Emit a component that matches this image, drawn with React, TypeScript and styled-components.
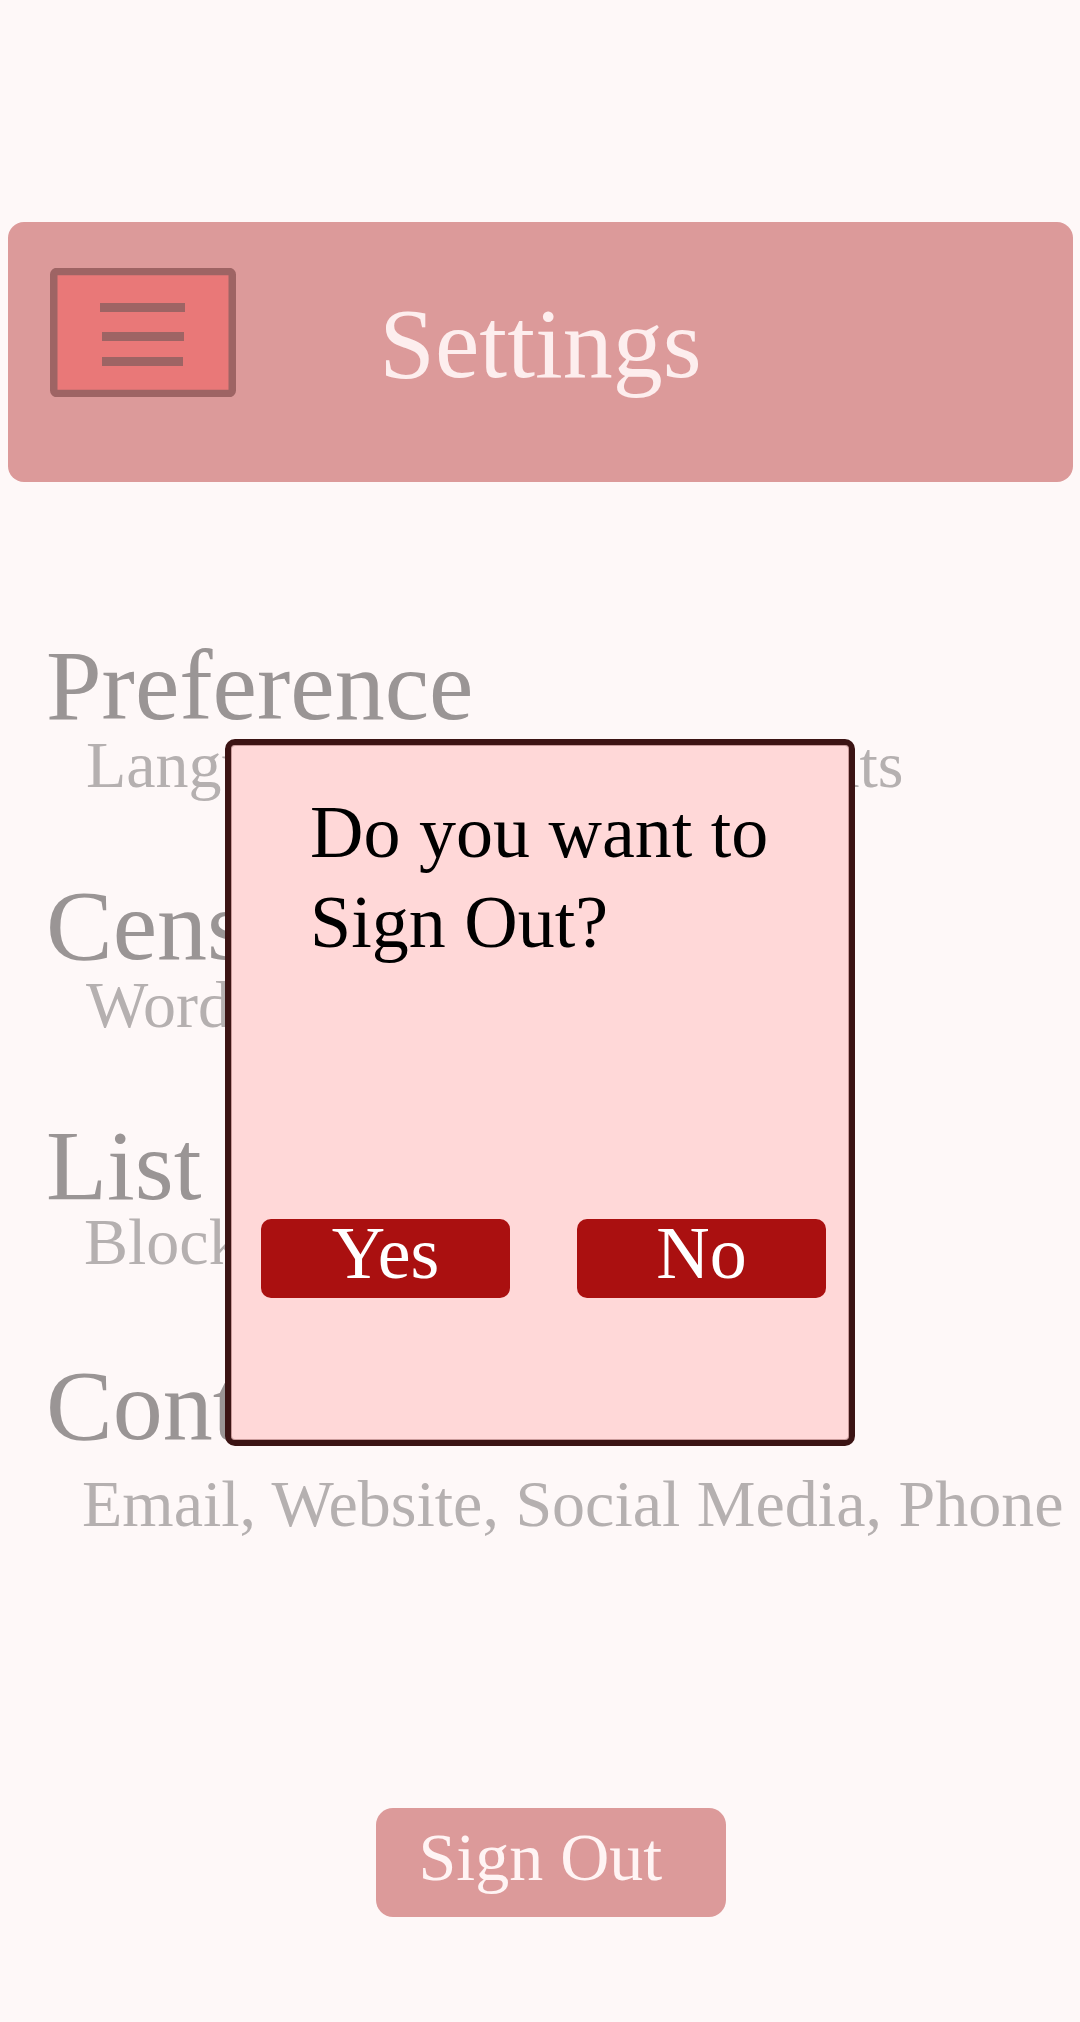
import styled, { createGlobalStyle } from 'styled-components';

const GlobalStyle = createGlobalStyle`
    * {
        box-sizing: border-box;
    }
    html, body {
        margin: 0;
        padding: 0;
        background: #fef8f8;
    }
    body {
        font-family: "Liberation Serif", "Times New Roman", serif;
    }
`;

const Page = styled.div`
    position: relative;
    min-height: 2022px;
    padding: 222px 7px 0 8px;
    display: flex;
    flex-direction: column;
`;

const Header = styled.header`
    height: 260px;
    border-radius: 16px;
    background: #dc9a9a;
    display: grid;
    grid-template-columns: 1fr auto 1fr;
    align-items: start;
`;

const MenuButton = styled.button`
    justify-self: start;
    display: block;
    width: 186px;
    height: 129px;
    margin: 46px 0 0 42px;
    padding: 0;
    border: 0;
    background: none;
`;

const Title = styled.h1`
    margin: 72px 0 0;
    font-size: 100px;
    line-height: 100px;
    font-weight: 400;
    color: #fdeeee;
`;

const Sections = styled.div`
    margin-top: 154px;
    padding-left: 38px;
`;

const Section = styled.section`
    height: 240px;
`;

const SectionTitle = styled.div`
    font-size: 100px;
    line-height: 100px;
    color: #9a9595;
    white-space: nowrap;
`;

const SectionHint = styled.div<{ $shift: number; $indent: number }>`
    margin-top: ${(p) => p.$shift}px;
    padding-left: ${(p) => p.$indent}px;
    font-size: 66px;
    line-height: 66px;
    color: #b5b0b0;
    white-space: nowrap;
`;

const Footer = styled.footer`
    display: flex;
    justify-content: center;
    padding-left: 20px;
    margin-top: 212px;
`;

const SignOutButton = styled.button`
    width: 350px;
    height: 109px;
    padding: 0 0 10px 43px;
    border: 0;
    border-radius: 17px;
    background: #dc9a9a;
    color: #fff4f4;
    font-family: "Liberation Serif", "Times New Roman", serif;
    font-size: 68px;
    line-height: 99px;
    text-align: left;
`;

const Overlay = styled.div`
    position: absolute;
    inset: 0;
    display: flex;
    justify-content: center;
    align-items: flex-start;
    padding-top: 739px;
`;

const Dialog = styled.div`
    width: 630px;
    height: 707px;
    padding: 42px 23px 0 30px;
    background: #ffd8d8;
    border: 6px solid #3c1414;
    border-radius: 10px;
    box-shadow: inset 0 0 0 1px #c99a9a;
`;

const DialogText = styled.p`
    margin: 0;
    padding-left: 49px;
    font-size: 74px;
    line-height: 90px;
    color: #000;
`;

const DialogActions = styled.div`
    display: flex;
    gap: 67px;
    margin-top: 252px;
`;

const DialogButton = styled.button`
    width: 249px;
    height: 79px;
    padding: 0 0 10px;
    border: 0;
    border-radius: 10px;
    background: #aa1010;
    color: #ffffff;
    font-family: "Liberation Serif", "Times New Roman", serif;
    font-size: 74px;
    line-height: 69px;
    text-align: center;
`;

const sections = [
    { title: 'Preference', hint: 'Language, Notifications, Fonts', shift: -4, indent: 40 },
    { title: 'Censorship', hint: 'Words, Images', shift: -4, indent: 40 },
    { title: 'List', hint: 'Blocked Accounts', shift: -7, indent: 38 },
    { title: 'Contact Us', hint: 'Email, Website, Social Media, Phone', shift: 15, indent: 36 },
];

const MenuIcon = () => (
    <svg width="186" height="129" viewBox="0 0 186 129">
        <rect x="3.75" y="3.5" width="178.5" height="122" rx="3" fill="#e97878" stroke="#9e6464" strokeWidth="7.5" />
        <rect x="50" y="35" width="85" height="9" fill="#9e6464" />
        <rect x="52" y="64" width="82" height="9" fill="#9e6464" />
        <rect x="52" y="89" width="81" height="9" fill="#9e6464" />
    </svg>
);

const App = () => {
    return (
        <>
            <GlobalStyle />
            <Page>
                <Header>
                    <MenuButton aria-label="Menu">
                        <MenuIcon />
                    </MenuButton>
                    <Title>Settings</Title>
                </Header>
                <Sections>
                    {sections.map((s) => (
                        <Section key={s.title}>
                            <SectionTitle>{s.title}</SectionTitle>
                            <SectionHint $shift={s.shift} $indent={s.indent}>{s.hint}</SectionHint>
                        </Section>
                    ))}
                </Sections>
                <Footer>
                    <SignOutButton>Sign Out</SignOutButton>
                </Footer>
                <Overlay>
                    <Dialog>
                        <DialogText>Do you want to Sign Out?</DialogText>
                        <DialogActions>
                            <DialogButton>Yes</DialogButton>
                            <DialogButton>No</DialogButton>
                        </DialogActions>
                    </Dialog>
                </Overlay>
            </Page>
        </>
    );
};

export default App;
